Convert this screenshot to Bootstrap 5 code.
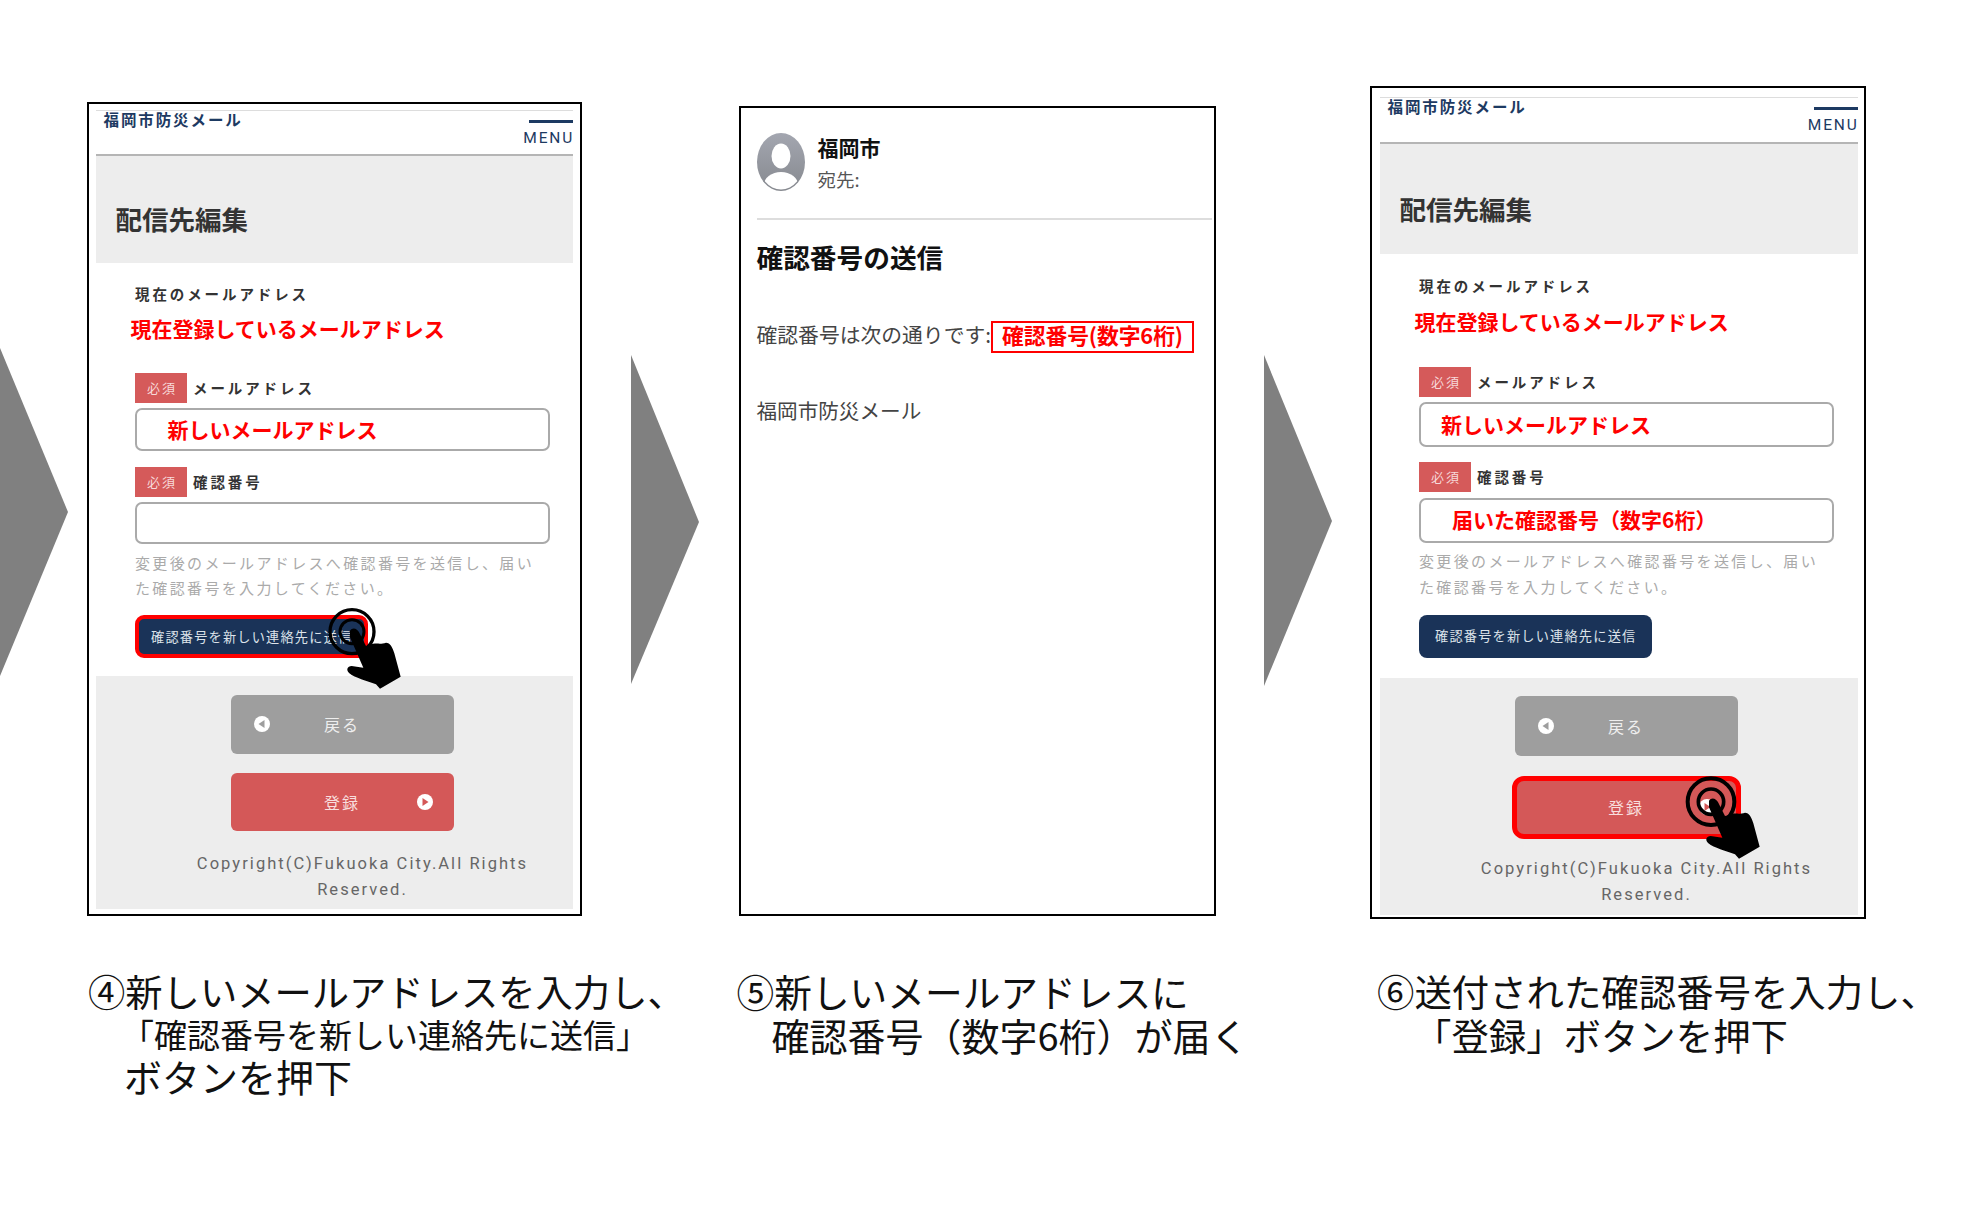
<!doctype html>
<html lang="ja">
<head>
<meta charset="utf-8">
<title>配信先編集</title>
<link href="https://cdn.jsdelivr.net/npm/bootstrap@5.3.0/dist/css/bootstrap.min.css" rel="stylesheet">
<style>
html,body{margin:0;background:#fff;overflow:hidden}
body{font-family:"Noto Sans CJK JP","Liberation Sans",sans-serif;color:#111}
.slide{display:grid;width:1964px;height:1215px;grid-template-columns:87px 495px 157px 477px 154px 496px;grid-template-rows:970px auto}
.arrow{display:block;align-self:start;fill:#808080}
.arrow-a{grid-column:1;margin-top:348px}
.arrow-b{grid-column:3;margin-left:49px;margin-top:355px}
.arrow-c{grid-column:5;margin-left:48px;margin-top:355px}
.frame{align-self:start;border:2.5px solid #000;background:#fff}
.shot-a{grid-column:2;margin-top:101.5px;padding:6px 7px 5.5px 6.5px;--hdr:46px;--band:107px;--bp:29px;--fl:39.5px;--m1:21px;--m2:10.5px;--m3:31px;--mi:5px;--mi2:5px;--ip:30.5px;--inp:43px;--m4:16px;--inp2:42px;--m5:5.5px;--hl:25.5px;--m6:14.5px;--m7:18px;--back:58.5px;--m8:19px;--m9:19px;--m10:19.5px;--pb:6px}
.shot-c{grid-column:6;margin-top:86px;padding:8.5px 6.5px 1.5px 7.5px;--hdr:47px;--band:110px;--bp:30px;--fl:39.5px;--m1:22px;--m2:11.5px;--m3:32px;--mi:5px;--mi2:6px;--ip:20px;--inp:45px;--m4:15px;--inp2:44.5px;--m5:5px;--hl:26px;--m6:15px;--m7:20px;--back:60px;--m8:18px;--m9:20px;--m10:17px;--pb:7.5px}
.app-head{height:var(--hdr);border-top:1px solid #ddd;border-bottom:2px solid #b5b5b5}
.app-name{margin:-1px 0 0 8px;font-size:15.5px;line-height:18px;letter-spacing:1.9px;font-weight:700;color:#1d3a62}
.menu-box{width:54px;padding-top:9px}
.menu-bar{height:3px;width:44px;margin-left:auto;background:#1d3a62}
.menu-txt{font-family:Roboto,"Liberation Sans",sans-serif;font-size:15.5px;line-height:16px;letter-spacing:1.8px;color:#1d3a62;margin-top:7px;text-align:right;margin-right:-1px}
.band{height:var(--band);background:#ededed;padding:0 0 var(--bp) 20px}
.band-title{margin:0;font-size:26.5px;line-height:30px;font-weight:700;color:#333}
.form-area{padding:0 23.5px 0 var(--fl)}
.field-name{font-size:14.5px;line-height:20px;letter-spacing:2.9px;font-weight:700;color:#333;margin:0}
.cur{margin-top:var(--m1)}
.red-note{font-size:21px;line-height:28px;font-weight:700;color:#f00;margin:var(--m2) 0 0 -4.5px}
.req{width:52px;height:30px;border-radius:0;background:#d55a5a;color:#f7d9d9;font-size:13px;font-weight:400;letter-spacing:2px;line-height:30px;padding:0 0 0 2px;margin-right:6px}
.req-one{margin-top:var(--m3)}
.req-two{margin-top:var(--m4)}
.inp{height:var(--inp);margin-top:var(--mi);padding:0 0 0 var(--ip);border:2px solid #aaa;border-radius:7px;font-size:21px;line-height:1;font-weight:700;color:#f00}
.inp-two{height:var(--inp2);margin-top:var(--mi2)}
.inp-ind{padding:0 0 2px 31px}
.hint{margin:var(--m5) 0 0;font-size:15px;line-height:var(--hl);letter-spacing:2.35px;color:#aaa}
.send-wrap{margin-top:var(--m6);width:233px}
.send{width:233px;height:43px;padding:0 0 0 16px;border:0;border-radius:8px;background:#1a3358;color:#dde3ea;font-size:13.2px;letter-spacing:1.2px;text-align:left;white-space:nowrap}
.send-on{padding-left:12px;border:4px solid #f00;border-radius:9px}
.tap{display:block;width:150px;height:120px;pointer-events:none}
.tap-a{top:-25px;left:165px}
.tap-c{top:-16px;left:144px}
.foot{margin-top:var(--m7);background:#ededed;padding:var(--m8) 0 var(--pb) 135px}
.nav-btn{width:223px;height:var(--back);padding:0;border:0;border-radius:6px;font-size:16px;letter-spacing:2px;color:#eee;line-height:1}
.nav-back{background:#9e9e9e}
.nav-next{background:#d45858;color:#f8dede}
.nav-wrap{margin-top:var(--m9);width:223px}
.side{flex:1 1 0;display:flex;align-items:center}
.side svg{display:block}
.side-l svg{margin-left:22px}
.side-r{justify-content:flex-end}
.side-r svg{margin-right:20px}
.nav-ring{width:229px;height:63px;margin-left:-3px;border:5px solid #f00;border-radius:12px}
.copy{font-family:Roboto,"Liberation Sans",sans-serif;font-size:16.5px;line-height:26px;letter-spacing:2.05px;color:#666;text-align:center;margin:var(--m10) 0 0 -79.5px;width:423px;white-space:nowrap}
.mail{grid-column:4;margin-top:106px;height:810px;padding:24.5px 0 0 15.5px}
.avatar{display:block;width:48px;height:58px;flex:none}
.who{margin:0 0 0 13px}
.who-name{font-size:21px;line-height:28px;font-weight:700;color:#111}
.who-to{font-size:18.5px;line-height:26px;color:#555;margin-top:5px}
.rule{height:2px;margin:26.5px 2px 0 0;background:#ddd}
.mail-title{margin:19px 0 0;font-size:26.7px;line-height:36px;font-weight:700;color:#111}
.mail-line{margin-top:46px;height:32px;font-size:20.8px;line-height:26px;color:#444;white-space:nowrap}
.code{width:203px;height:32px;margin-left:0;border:2px solid #f00;font-size:21.8px;line-height:23px;font-weight:700;color:#f00;padding-left:9px;letter-spacing:-.1px}
.mail-foot{margin-top:42px;font-size:20.6px;line-height:30px;color:#444}
.cap{grid-row:2;white-space:nowrap;color:#111}
.cap-line{display:block}
.cap-a{grid-column:2;font-size:37.3px;line-height:43px;margin-left:1px}
.cap-b{grid-column:4;font-size:37.7px;line-height:44px;margin:-1.5px 0 0 -2.5px}
.cap-c{grid-column:6;font-size:37.4px;line-height:44px;margin:-1.5px 0 0 7px}
.ind-a{font-size:33px;padding-left:33px}
.ind-b{font-size:38px;line-height:41px;padding-left:36px;margin-top:-1px}
.ind-c{font-size:38px;padding-left:35px}
.ind-d{padding-left:37px}
</style>
</head>
<body>
<svg width="0" height="0" class="position-absolute" aria-hidden="true"><defs>
<symbol id="handmark" viewBox="0 0 450 360">
<path fill="#000" d="M150 122C158 110 172 116 178 128L198 168L208 166C225 156 240 165 258 158C270 158 278 172 283 190L302 260L240 296L228 283C200 272 165 264 148 250C137 240 142 228 155 228L190 233L150 142Z"/>
</symbol>
<symbol id="tapmark" viewBox="0 0 450 360">
<circle cx="156" cy="125" r="66" fill="none" stroke="#000" stroke-width="10"/>
<circle cx="156" cy="125" r="36" fill="none" stroke="#000" stroke-width="9"/>
<use href="#handmark"/>
</symbol>
<symbol id="tapmark-big" viewBox="0 0 450 360">
<circle cx="156" cy="125" r="70" fill="none" stroke="#000" stroke-width="12"/>
<circle cx="156" cy="125" r="38" fill="none" stroke="#000" stroke-width="11"/>
<use href="#handmark"/>
</symbol>
<symbol id="goback" viewBox="0 0 18 18"><circle cx="9" cy="9" r="8" fill="#fff"/><path d="M11.5 5v8L5.5 9z" fill="#9e9e9e"/></symbol>
<symbol id="gonext" viewBox="0 0 18 18"><circle cx="9" cy="9" r="8" fill="#fff"/><path d="M6.5 5v8l6-4z" fill="#d45858"/></symbol>
<linearGradient id="avfill" x1="0" y1="0" x2="0" y2="1"><stop offset="0" stop-color="#a3a6b0"/><stop offset="1" stop-color="#86898f"/></linearGradient>
<clipPath id="avclip"><ellipse cx="24" cy="29" rx="22.5" ry="27.5"/></clipPath>
</defs></svg>

<main class="slide">
  <svg class="arrow arrow-a" width="68" height="328" viewBox="0 0 68 328"><polygon points="0,0 68,164 0,328"/></svg>

  <div class="frame shot-a">
    <div class="app-head d-flex justify-content-between">
      <p class="app-name">福岡市防災メール</p>
      <div class="menu-box"><div class="menu-bar"></div><div class="menu-txt">MENU</div></div>
    </div>
    <div class="band d-flex align-items-end"><h2 class="band-title">配信先編集</h2></div>
    <div class="form-area">
      <p class="field-name cur">現在のメールアドレス</p>
      <p class="red-note">現在登録しているメールアドレス</p>
      <div class="d-flex align-items-center req-one"><span class="badge req">必須</span><span class="field-name">メールアドレス</span></div>
      <div class="form-control inp d-flex align-items-center">新しいメールアドレス</div>
      <div class="d-flex align-items-center req-two"><span class="badge req">必須</span><span class="field-name">確認番号</span></div>
      <div class="form-control inp inp-two"></div>
      <p class="hint">変更後のメールアドレスへ確認番号を送信し、届い<br>た確認番号を入力してください。</p>
      <div class="send-wrap position-relative">
        <button class="btn send send-on" type="button">確認番号を新しい連絡先に送信</button>
        <svg class="tap tap-a position-absolute" aria-hidden="true"><use href="#tapmark"/></svg>
      </div>
    </div>
    <div class="foot">
      <button class="btn nav-btn nav-back d-flex align-items-center" type="button"><span class="side side-l"><svg width="18" height="18"><use href="#goback"/></svg></span><span>戻る</span><span class="side"></span></button>
      <div class="nav-wrap"><button class="btn nav-btn nav-next d-flex align-items-center" type="button"><span class="side"></span><span>登録</span><span class="side side-r"><svg width="18" height="18"><use href="#gonext"/></svg></span></button></div>
      <p class="copy">Copyright(C)Fukuoka City.All Rights<br>Reserved.</p>
    </div>
  </div>

  <svg class="arrow arrow-b" width="68" height="329" viewBox="0 0 68 329"><polygon points="0,0 68,167 0,329"/></svg>

  <div class="frame mail">
    <div class="d-flex">
      <svg class="avatar" viewBox="0 0 48 58" preserveAspectRatio="none" aria-hidden="true"><ellipse cx="24" cy="29" rx="24" ry="29" fill="url(#avfill)"/><g clip-path="url(#avclip)" fill="#fff"><ellipse cx="24" cy="23" rx="9.5" ry="12.5"/><ellipse cx="24" cy="52" rx="17" ry="13"/></g></svg>
      <div class="who"><div class="who-name">福岡市</div><div class="who-to">宛先:</div></div>
    </div>
    <div class="rule"></div>
    <h2 class="mail-title">確認番号の送信</h2>
    <div class="mail-line d-flex"><span>確認番号は次の通りです:</span><span class="code">確認番号(数字6桁)</span></div>
    <div class="mail-foot">福岡市防災メール</div>
  </div>

  <svg class="arrow arrow-c" width="68" height="331" viewBox="0 0 68 331"><polygon points="0,0 68,166 0,331"/></svg>

  <div class="frame shot-c">
    <div class="app-head d-flex justify-content-between">
      <p class="app-name">福岡市防災メール</p>
      <div class="menu-box"><div class="menu-bar"></div><div class="menu-txt">MENU</div></div>
    </div>
    <div class="band d-flex align-items-end"><h2 class="band-title">配信先編集</h2></div>
    <div class="form-area">
      <p class="field-name cur">現在のメールアドレス</p>
      <p class="red-note">現在登録しているメールアドレス</p>
      <div class="d-flex align-items-center req-one"><span class="badge req">必須</span><span class="field-name">メールアドレス</span></div>
      <div class="form-control inp d-flex align-items-center">新しいメールアドレス</div>
      <div class="d-flex align-items-center req-two"><span class="badge req">必須</span><span class="field-name">確認番号</span></div>
      <div class="form-control inp inp-two inp-ind d-flex align-items-center">届いた確認番号（数字6桁）</div>
      <p class="hint">変更後のメールアドレスへ確認番号を送信し、届い<br>た確認番号を入力してください。</p>
      <div class="send-wrap"><button class="btn send" type="button">確認番号を新しい連絡先に送信</button></div>
    </div>
    <div class="foot">
      <button class="btn nav-btn nav-back d-flex align-items-center" type="button"><span class="side side-l"><svg width="18" height="18"><use href="#goback"/></svg></span><span>戻る</span><span class="side"></span></button>
      <div class="nav-wrap position-relative">
        <button class="btn nav-btn nav-next nav-ring d-flex align-items-center" type="button"><span class="side"></span><span>登録</span><span class="side side-r"><svg width="18" height="18"><use href="#gonext"/></svg></span></button>
        <svg class="tap tap-c position-absolute" aria-hidden="true"><use href="#tapmark-big"/></svg>
      </div>
      <p class="copy">Copyright(C)Fukuoka City.All Rights<br>Reserved.</p>
    </div>
  </div>

  <div class="cap cap-a"><span class="cap-line">④新しいメールアドレスを入力し、</span><span class="cap-line ind-a">「確認番号を新しい連絡先に送信」</span><span class="cap-line ind-b">ボタンを押下</span></div>
  <div class="cap cap-b"><span class="cap-line">⑤新しいメールアドレスに</span><span class="cap-line ind-c">確認番号（数字6桁）が届く</span></div>
  <div class="cap cap-c"><span class="cap-line">⑥送付された確認番号を入力し、</span><span class="cap-line ind-d">「登録」ボタンを押下</span></div>
</main>
<script src="https://cdn.jsdelivr.net/npm/bootstrap@5.3.0/dist/js/bootstrap.bundle.min.js"></script>
</body>
</html>
